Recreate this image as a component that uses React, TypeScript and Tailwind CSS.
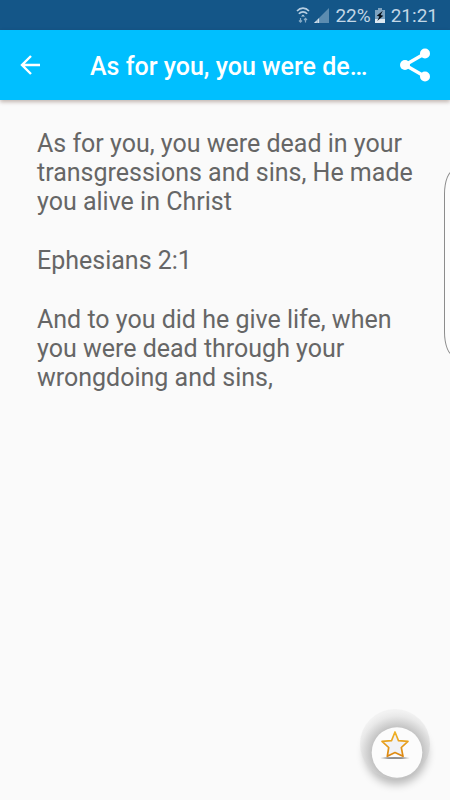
import React from 'react';

const verse = {
  title: 'As for you, you were de…',
  paragraphs: [
    'As for you, you were dead in your transgressions and sins, He made you alive in Christ',
    'Ephesians 2:1',
    'And to you did he give life, when you were dead through your wrongdoing and sins,',
  ],
};

const WifiIcon = () => (
  <svg width="14" height="18" viewBox="0 0 14 18" fill="none" stroke="#b7cfe2" strokeWidth="1.6">
    <path d="M1 5C4.4 1.2 9.6 1.2 13 5" />
    <path d="M2.8 7.8C5.3 5.2 8.7 5.2 11.2 7.8" />
    <path d="M5 10.4L7 8.4L9 10.4Z" fill="#b7cfe2" stroke="none" />
    <path d="M4.500 12V16M3 14.500L4.500 16.200L6 14.500" stroke="#86aac6" strokeWidth="1.200" />
    <path d="M9.500 16.500V12.500M8 14L9.500 12.300L11 14" stroke="#86aac6" strokeWidth="1.200" />
  </svg>
);

const SignalIcon = () => (
  <svg width="15" height="15" viewBox="0 0 16 16">
    <path d="M16 0V16H0Z" fill="#5c8cb0" />
    <path d="M0 16L3 13V16ZM3.600 12.400L5.400 10.600V16H3.600Z" fill="#d3e1ec" />
  </svg>
);

const BatteryIcon = () => (
  <svg width="10" height="15" viewBox="0 0 10 15">
    <path d="M3 0H7V2H10V15H0V2H3Z" fill="#7ea3c0" />
    <path d="M0 11H10V15H0Z" fill="#dce8f1" />
    <path d="M7.800 2.800L1.800 7.800L4.400 8.600L2.200 13L8.300 7.800L5.600 7Z" fill="#06101a" />
  </svg>
);

const BackIcon = () => (
  <svg width="20" height="20" viewBox="0 0 20 20" fill="none" stroke="white" strokeWidth="2.400">
    <path d="M20 10H2M11 1L2 10L11 19" />
  </svg>
);

const ShareIcon = () => (
  <svg width="30" height="34" viewBox="0 0 30 34">
    <path d="M25 5.500L5 17L25 28.500" fill="none" stroke="white" strokeWidth="3.400" />
    <circle cx="25" cy="5.500" r="5" fill="white" />
    <circle cx="5" cy="17" r="5" fill="white" />
    <circle cx="25" cy="28.500" r="5" fill="white" />
  </svg>
);

const FavoriteIcon = () => (
  <svg width="100" height="100" viewBox="0 0 100 100">
    <defs>
      <linearGradient id="starStroke" x1="0" y1="0" x2="0" y2="1">
        <stop offset="0" stopColor="#f0b428" />
        <stop offset="1" stopColor="#dc8610" />
      </linearGradient>
      <linearGradient id="starShadow" x1="0" y1="0" x2="1" y2="0">
        <stop offset="0" stopColor="#909090" stopOpacity="0.200" />
        <stop offset="0.250" stopColor="#909090" />
        <stop offset="0.750" stopColor="#909090" />
        <stop offset="1" stopColor="#909090" stopOpacity="0.200" />
      </linearGradient>
      <radialGradient id="ring" gradientUnits="userSpaceOnUse" cx="47" cy="53" r="42">
        <stop offset="0.500" stopColor="#b4b4b4" />
        <stop offset="0.700" stopColor="#d0d0d0" />
        <stop offset="0.880" stopColor="#e9e9e9" />
        <stop offset="1" stopColor="#f2f2f2" />
      </radialGradient>
      <filter id="soft" x="-50%" y="-50%" width="200%" height="200%">
        <feGaussianBlur stdDeviation="5" />
      </filter>
    </defs>
    <circle cx="46" cy="53" r="31" fill="#000" opacity="0.280" filter="url(#soft)" />
    <circle cx="45" cy="44" r="35" fill="url(#ring)" />
    <circle cx="47" cy="52.500" r="25.300" fill="#fcfcfc" />
    <ellipse cx="45" cy="58" rx="14.500" ry="1" fill="url(#starShadow)" />
    <path
      d="M45 32L48.500 40.700L58 41.300L51.300 47.500L53 56.300L45 52.500L37.300 56.300L38.700 47.500L32 41.300L41.500 40.700Z"
      fill="#f1f2f5"
      stroke="url(#starStroke)"
      strokeWidth="1.700"
      strokeLinejoin="round"
    />
  </svg>
);

const StatusBar = () => (
  <div className="flex h-[30px] items-center justify-end bg-[#145688] pr-3 text-[19px] leading-none text-[#c3d7e6]">
    <WifiIcon />
    <span className="ml-1"><SignalIcon /></span>
    <span className="ml-1.5">22%</span>
    <span className="ml-1"><BatteryIcon /></span>
    <span className="ml-1.5">21:21</span>
  </div>
);

export default function App() {
  return (
    <div className="flex min-h-screen flex-col bg-[#fafafa] font-['Roboto',sans-serif]">
      <StatusBar />

      <header className="flex h-[70px] items-center bg-[#00bfff] px-5 shadow-[0_2px_4px_rgba(60,20,0,0.3)]">
        <button type="button" aria-label="Back" className="shrink-0">
          <BackIcon />
        </button>
        <h1 className="ml-[50px] flex-1 whitespace-nowrap pt-1 text-[25px] font-medium leading-8 text-white">
          {verse.title}
        </h1>
        <button type="button" aria-label="Share" className="shrink-0">
          <ShareIcon />
        </button>
      </header>

      <main className="flex flex-1 flex-col gap-[30px] px-[37px] pt-[29px] text-[25px] leading-[29px] text-[#666]">
        {verse.paragraphs.map((text) => (
          <p key={text}>{text}</p>
        ))}
      </main>

      {/* edge panel handle, runs off the right side */}
      <div className="fixed right-0 top-[170px] h-[186px] w-1.5 overflow-hidden">
        <div className="h-full w-6 rounded-[10px/24px] border border-[#8c8c8c] bg-[#fcfcfc]" />
      </div>

      <button type="button" aria-label="Add to favorites" className="fixed bottom-0 right-0">
        <FavoriteIcon />
      </button>
    </div>
  );
}
